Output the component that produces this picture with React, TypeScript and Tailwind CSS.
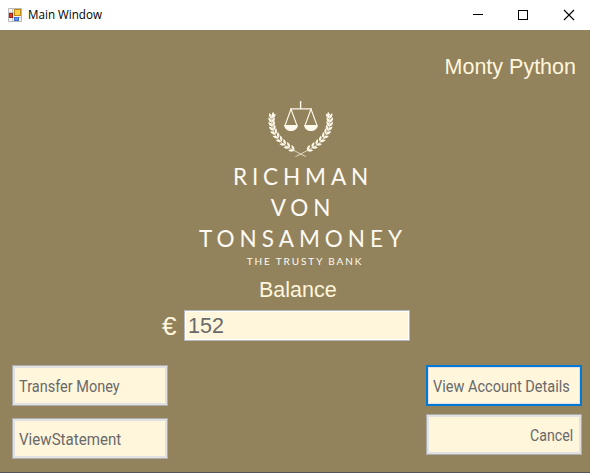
import React from "react";

// Spine points of the left laurel branch with the direction of growth in degrees.
const leaves: [number, number, number][] = [
  [271.9, 118.5, -85],
  [271.7, 122.5, -91],
  [272.3, 126.5, -99],
  [273.6, 130.5, -109],
  [275.6, 134.3, -119],
  [278.3, 138, -127],
  [281.6, 141.4, -134],
  [285.4, 144.6, -141],
  [289.6, 147.5, -146],
  [294.2, 150.3, -149],
];

function Branch() {
  return (
    <g>
      <path
        d="M272.5 114C269 130 276 142 294 150.5C298 152.5 302 155 306 156.5"
        fill="none"
        stroke="#fdf8ea"
        strokeWidth=".7"
      />
      <ellipse cx="273" cy="114.5" rx="1.1" ry="2.3" transform="rotate(8 273 114)" />
      {leaves.map(([x, y, a]) => (
        <g key={y} transform={`translate(${x} ${y}) rotate(${a})`}>
          <path d="M0 0C.2-2.3 2.3-3.5 5-3.3C4.5-1.2 2.5 .2 0 0Z" />
          <path d="M0 0C.2 2.3 2.3 3.5 5 3.3C4.5 1.2 2.5-.2 0 0Z" />
        </g>
      ))}
    </g>
  );
}

function Emblem() {
  return (
    <svg width="100" height="65" viewBox="250 95 100 65" fill="#fdf8ea">
      <Branch />
      <g transform="translate(601.4 0) scale(-1 1)">
        <Branch />
      </g>
      <g fill="none" stroke="#fdf8ea" strokeWidth="1.1">
        <path d="M300.6 101V109M290 108.9H312" strokeWidth="1.4" />
        <path d="M291 109L285 125.5M291 109L297 125.5M311 109L305 125.5M311 109L317 125.5" />
      </g>
      <path d="M284 125H298C297.4 129 294.4 131.1 291 131.1S284.6 129 284 125ZM304 125H318C317.4 129 314.4 131.1 311 131.1S304.6 129 304 125Z" />
    </svg>
  );
}

function AppIcon() {
  return (
    <svg width="14" height="14" viewBox="0 0 14 14">
      <path d="M.5.5H13.5V13.5H.5Z" fill="#f4f4f4" stroke="#b8b8b8" />
      <path d="M.5 4.5H6M4.5 1V13M4.5 9.5H13" stroke="#c8c8c8" />
      <rect x="6.5" y="1.5" width="6" height="6" fill="#fbd04b" stroke="#c28a12" />
      <rect x="1.5" y="5.5" width="3" height="4" fill="#d6402b" stroke="#a51d12" />
      <rect x="6.5" y="9.5" width="4" height="3" fill="#5f94ef" stroke="#3d6fd0" />
    </svg>
  );
}

type ActionProps = { children: string; scale: string; focused?: boolean; right?: boolean };

function Action({ children, scale, focused, right }: ActionProps) {
  return (
    <button
      className={`flex h-[41px] w-[156px] items-center bg-[#fff6dc] pt-[3px] font-['Roboto',sans-serif] text-[16.5px] text-[#696969] ${
        right ? "justify-end" : "justify-start"
      } ${
        focused
          ? "border-2 border-[#0078d7] px-[5px] shadow-[inset_0_0_0_1px_#e1e1e1]"
          : "border border-[#adadad] pr-[8px] pl-[6px] shadow-[inset_0_0_0_2px_#e1e1e1]"
      }`}
    >
      <span className={`whitespace-nowrap ${right ? "origin-right" : "origin-left"} ${scale}`}>{children}</span>
    </button>
  );
}

export default function App() {
  return (
    <div className="flex h-[473px] w-[590px] flex-col overflow-hidden border-b border-[#55515a] bg-[#93835d] font-['Liberation_Sans',Arial,sans-serif]">
      <header className="flex h-[30px] shrink-0 items-center bg-white pr-[15px] pl-2">
        <AppIcon />
        <span className="ml-1.5 origin-left scale-x-[.97] font-['Open_Sans','Noto_Sans',sans-serif] text-[12px] text-black">
          Main Window
        </span>
        <svg className="mb-px ml-auto" width="103" height="12" viewBox="0 0 103 12" fill="none" stroke="#000">
          <path d="M1 5.5H11" />
          <rect x="46.5" y="1.5" width="9" height="9" />
          <path d="M92 1L102 11M102 1L92 11" strokeWidth="1.1" />
        </svg>
      </header>

      <div className="flex h-[70px] shrink-0 justify-end pt-[24px] pr-[14px] text-[21.5px] leading-[27px] text-[#fff6dc]">
        Monty Python
      </div>

      <section className="-mt-[5px] flex h-[177px] shrink-0 flex-col items-center pl-[16px] font-['Lato',sans-serif] text-[22.5px] leading-[31px] text-[#fdfaf3]">
        <div className="h-[66px] pr-[6px]">
          <Emblem />
        </div>
        <div className="tracking-[4.9px]">RICHMAN</div>
        <div className="tracking-[4.9px]">VON</div>
        <div className="tracking-[5px]">TONSAMONEY</div>
        <div className="pl-[4px] text-[10px] leading-[14px] tracking-[1.9px]">THE TRUSTY BANK</div>
      </section>

      <section className="h-[93px] shrink-0 text-[#fff6dc]">
        <div className="h-[38px] pt-[4px] pl-[259px] text-[21.5px] leading-[28px]">Balance</div>
        <div className="flex h-[31px] items-center">
          <span className="w-[184px] pt-[2px] pl-[162px] text-[26px] leading-[31px]">€</span>
          <input
            className="h-[31px] w-[226px] border border-[#b4b8c0] bg-[#fff6dc] px-[3px] pt-[2px] text-[21.5px] text-[#696969] shadow-[inset_0_0_0_1px_#fff] outline-none"
            defaultValue="152"
          />
        </div>
      </section>

      <section className="flex justify-between pr-2 pl-3">
        <div className="flex flex-col gap-3">
          <Action scale="scale-x-[.88]">Transfer Money</Action>
          <Action scale="scale-x-[.915]">ViewStatement</Action>
        </div>
        <div className="flex flex-col gap-2">
          <Action scale="scale-x-[.88]" focused>
            View Account Details
          </Action>
          <Action scale="scale-x-[.86]" right>
            Cancel
          </Action>
        </div>
      </section>
    </div>
  );
}
